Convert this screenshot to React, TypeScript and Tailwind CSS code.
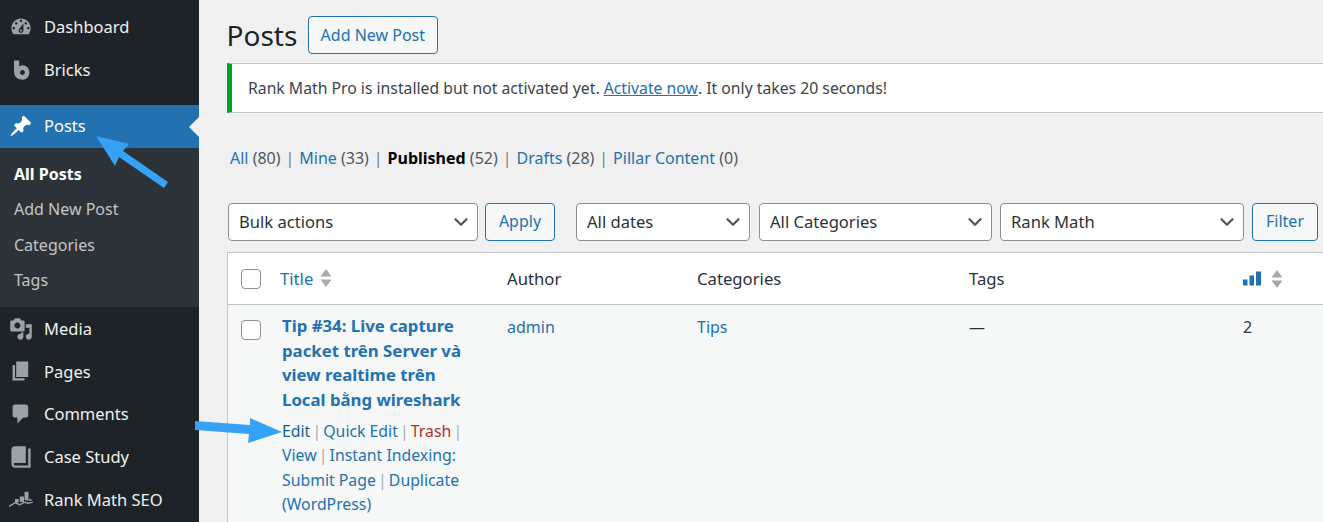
import React from 'react';
import { ChevronDown } from 'lucide-react';

const icons: Record<string, string> = {
  dashboard:
    'M3.76 16h12.48c1.1-1.37 1.76-3.11 1.76-5 0-4.42-3.58-8-8-8s-8 3.58-8 8c0 1.89.66 3.63 1.76 5zM10 4c.55 0 1 .45 1 1s-.45 1-1 1-1-.45-1-1 .45-1 1-1zM6 6c.55 0 1 .45 1 1s-.45 1-1 1-1-.45-1-1 .45-1 1-1zm8 0c.55 0 1 .45 1 1s-.45 1-1 1-1-.45-1-1 .45-1 1-1zm-5.37 5.55L12 7v6c0 1.1-.9 2-2 2s-2-.9-2-2c0-.57.24-1.08.63-1.45zM4 10c.55 0 1 .45 1 1s-.45 1-1 1-1-.45-1-1 .45-1 1-1zm12 0c.55 0 1 .45 1 1s-.45 1-1 1-1-.45-1-1 .45-1 1-1zm-5 3c0-.55-.45-1-1-1s-1 .45-1 1 .45 1 1 1 1-.45 1-1z',
  bricks: 'M4.2 2h4.300v4.900c.9-.5 1.900-.8 3-.8 3.100 0 5.500 2.600 5.500 6s-2.400 6-5.500 6c-3.700 0-7.300-2-7.300-6.400V2zm7 8c-1.100 0-2 .9-2 2s.9 2 2 2 2-.9 2-2-.9-2-2-2z',
  posts:
    'M10.44 3.02l1.82-1.82 6.36 6.35-1.83 1.82c-1.05-.68-2.48-.57-3.41.36l-.75.75c-.92.93-1.04 2.35-.35 3.41l-1.83 1.82-2.41-2.41-2.8 2.79c-.42.42-3.38 2.71-3.8 2.29s1.86-3.39 2.28-3.81l2.79-2.79L4.1 9.36l1.83-1.82c1.05.69 2.48.57 3.4-.36l.75-.75c.93-.92 1.05-2.35.36-3.41z',
  media:
    'M13 11V4c0-.55-.45-1-1-1h-1.67L9 1H5L3.67 3H2c-.55 0-1 .45-1 1v7c0 .55.45 1 1 1h10c.55 0 1-.45 1-1zM7 4.5c1.38 0 2.5 1.12 2.5 2.5S8.38 9.5 7 9.5 4.5 8.38 4.5 7 5.62 4.5 7 4.5zM14 6h5v10.5c0 1.38-1.12 2.5-2.5 2.5S14 17.88 14 16.5s1.12-2.5 2.5-2.5c.17 0 .34.02.5.05V9h-3V6zm-4 8.05V13h2v3.5c0 1.38-1.12 2.5-2.5 2.5S7 17.88 7 16.5 8.12 14 9.5 14c.17 0 .34.02.5.05z',
  pages: 'M6 15V2h10v13H6zm-1 1h8v2H3V5h2v11z',
  comments: 'M5 2h9c1.1 0 2 .9 2 2v7c0 1.1-.9 2-2 2h-2l-5 5v-5H5c-1.1 0-2-.9-2-2V4c0-1.1.9-2 2-2z',
  book: 'M16 3h2v16H5c-1.66 0-3-1.34-3-3V4c0-1.66 1.34-3 3-3h9v14H5c-.55 0-1 .45-1 1s.45 1 1 1h11V3z',
  rank: 'M5 10h3v3H5zM9 8h3.500v4.500H9zM13 4h3.200v7.500l-3.200-.6zM16.800 9.500l3 1.700-3 .5zM0 15.500l5-3 4 1.600 4-2 3 .8 4-.7v1l-4 1-3-.8-4 2-4-1.600-5 3z',
};

const MenuIcon = ({ name, fill = '#9ca1a7' }: { name: string; fill?: string }) => (
  <svg viewBox="0 0 20 20" className="w-6 h-6" fill={fill}>
    <path d={icons[name]} />
  </svg>
);

const MenuItem = ({ icon, label }: { icon: string; label: string }) => (
  <div className="h-[42.7px] flex items-center text-[#f0f0f1] text-[16.5px]">
    <div className="w-[44px] pl-[9px] shrink-0">
      <MenuIcon name={icon} />
    </div>
    <span className="pt-[1.5px]">{label}</span>
  </div>
);

const Select = ({ label, width }: { label: string; width: string }) => (
  <div className={`h-[38px] ${width} flex items-center justify-between bg-white border border-[#8c8f94] rounded-[4px] pl-[10px] pr-[5px] text-[#2c3338] text-[16.6px]`}>
    <span>{label}</span>
    <ChevronDown className="w-[22px] h-[22px] text-[#50575e]" strokeWidth={2.5} />
  </div>
);

const OutlineButton = ({ label, width }: { label: string; width: string }) => (
  <div className={`h-[38px] ${width} flex items-center justify-center bg-[#f6f7f7] border border-[#2271b1] rounded-[4px] text-[#2271b1]`}>
    {label}
  </div>
);

const Checkbox = () => <div className="w-5 h-5 bg-white border border-[#8c8f94] rounded-[4px]" />;

const SortArrows = () => (
  <svg viewBox="0 0 12 18" className="w-[12px] h-[18px]" fill="#a7aaad">
    <path d="M6 0l5.5 7.5H.5zM.5 10.5h11L6 18z" />
  </svg>
);

const Sep = () => <span className="inline-block w-[13px] text-center text-[#a7aaad]">|</span>;
const FilterSep = () => <span className="inline-block w-[18.7px] text-center text-[#787c82]">|</span>;

const ROW = 'grid grid-cols-[52px_227px_190px_272px_274px_100px]';

export default function App() {
  return (
    <div className="relative w-[1323px] h-[522px] overflow-hidden flex bg-[#f0f0f1] text-[16px] font-['Noto_Sans',sans-serif]">
      {/* sidebar */}
      <aside className="w-[199px] shrink-0 bg-[#1d2327] pt-[5.5px]">
        <MenuItem icon="dashboard" label="Dashboard" />
        <MenuItem icon="bricks" label="Bricks" />
        <div className="h-[14px]" />
        <div className="h-[43px] flex items-center bg-[#2271b1] text-white text-[16.5px] relative">
          <div className="w-[44px] pl-[9px] shrink-0">
            <MenuIcon name="posts" fill="#fff" />
          </div>
          <span className="pb-[1px]">Posts</span>
          <div className="absolute right-0 top-[12px] w-0 h-0 border-y-[10px] border-y-transparent border-r-[10px] border-r-[#f0f0f1]" />
        </div>
        <div className="h-[159.5px] bg-[#2c3338] pt-[8px] pl-[14px] text-[#c3c4c7]">
          <div className="h-[35.5px] flex items-center font-bold text-white">All Posts</div>
          <div className="h-[35.5px] flex items-center">Add New Post</div>
          <div className="h-[35.5px] flex items-center">Categories</div>
          <div className="h-[35.5px] flex items-center">Tags</div>
        </div>
        <MenuItem icon="media" label="Media" />
        <MenuItem icon="pages" label="Pages" />
        <MenuItem icon="comments" label="Comments" />
        <MenuItem icon="book" label="Case Study" />
        <MenuItem icon="rank" label="Rank Math SEO" />
      </aside>

      {/* main */}
      <main className="flex-1 min-w-0 pl-[28px] pt-[16px]">
        <div className="flex items-center gap-[10.5px] h-[38px]">
          <h1 className="text-[28px] text-[#1d2327] -ml-[0.5px]">Posts</h1>
          <OutlineButton label="Add New Post" width="w-[130px]" />
        </div>

        <div className="mt-[9px] h-[50px] flex items-center bg-white border-l-[5px] border-l-[#00a32a] border-y border-y-[#c3c4c7] pl-[16px] pt-[1px] text-[#3c434a] text-[15.75px] whitespace-nowrap">
          Rank Math Pro is installed but not activated yet.&nbsp;
          <span className="text-[#2271b1] underline">Activate now</span>. It only takes 20 seconds!
        </div>

        <div className="mt-[33px] h-[24px] flex items-center whitespace-pre pl-[3px] text-[#50575e]">
          <span className="text-[#2271b1]">All</span> (80)
          <FilterSep /><span className="text-[#2271b1]">Mine</span> (33)
          <FilterSep /><span className="font-bold text-black">Published</span> (52)
          <FilterSep /><span className="text-[#2271b1]">Drafts</span> (28)
          <FilterSep /><span className="text-[#2271b1]">Pillar Content</span> (0)
        </div>

        <div className="mt-[33px] flex items-center">
          <div className="w-[1px]" />
          <Select label="Bulk actions" width="w-[250px]" />
          <div className="w-[7px]" />
          <OutlineButton label="Apply" width="w-[70px] pb-[2px]" />
          <div className="w-[21px]" />
          <Select label="All dates" width="w-[174px]" />
          <div className="w-[9px]" />
          <Select label="All Categories" width="w-[233px]" />
          <div className="w-[8px]" />
          <Select label="Rank Math" width="w-[244px]" />
          <div className="w-[8px]" />
          <OutlineButton label="Filter" width="w-[66px] pb-[2px]" />
        </div>

        <div className="mt-[11px] w-[1200px] h-[300px] bg-[#f6f7f7] border-l border-l-[#c3c4c7] border-t border-t-[#c3c4c7] text-[#2c3338]">
          <div className={`${ROW} h-[52px] items-center bg-white border-b border-b-[#c3c4c7] text-[16.7px]`}>
            <div className="pl-[13px]"><Checkbox /></div>
            <div className="flex items-center gap-[7px] text-[#2271b1]">Title <SortArrows /></div>
            <div>Author</div>
            <div>Categories</div>
            <div>Tags</div>
            <div className="flex items-center gap-[10px]">
              <svg viewBox="0 0 18 14" className="w-[18px] h-[17px]" fill="#2271b1">
                <path d="M0 8h4.5v6H0zM6.5 4H11v10H6.5zM13 0h5v14h-5z" />
              </svg>
              <SortArrows />
            </div>
          </div>
          <div className={`${ROW} pt-[9px]`}>
            <div className="pl-[13px] pt-[6px]"><Checkbox /></div>
            <div>
              <div className="font-bold text-[#2271b1] text-[16.8px] leading-[24.5px] pl-[2px]">
                Tip #34: Live capture<br />packet trên Server và<br />view realtime trên<br />Local bằng wireshark
              </div>
              <div className="mt-[6.5px] pl-[2px] leading-[24.5px] text-[15.8px] text-[#2271b1] whitespace-pre">
                <span className="text-[#135e96]">Edit</span><Sep />Quick Edit<Sep /><span className="text-[#b32d2e]">Trash</span><Sep /><br />
                View<Sep />Instant Indexing:<br />Submit Page<Sep />Duplicate<br />(WordPress)
              </div>
            </div>
            <div className="text-[#2271b1] pt-[1px]">admin</div>
            <div className="text-[#2271b1] pt-[1px]">Tips</div>
            <div className="pt-[1px]">—</div>
            <div className="pt-[1px]">2</div>
          </div>
        </div>
      </main>

      {/* annotation arrows */}
      <svg className="absolute inset-0 pointer-events-none" width="1323" height="522" fill="#36a2f5">
        <path d="M96 136L129 144 123 151 168 182 164 188 119 157 115 166z" />
        <path d="M195 421L250 425 250 418 282 432 248 443 249 434 195 430z" />
      </svg>
    </div>
  );
}
